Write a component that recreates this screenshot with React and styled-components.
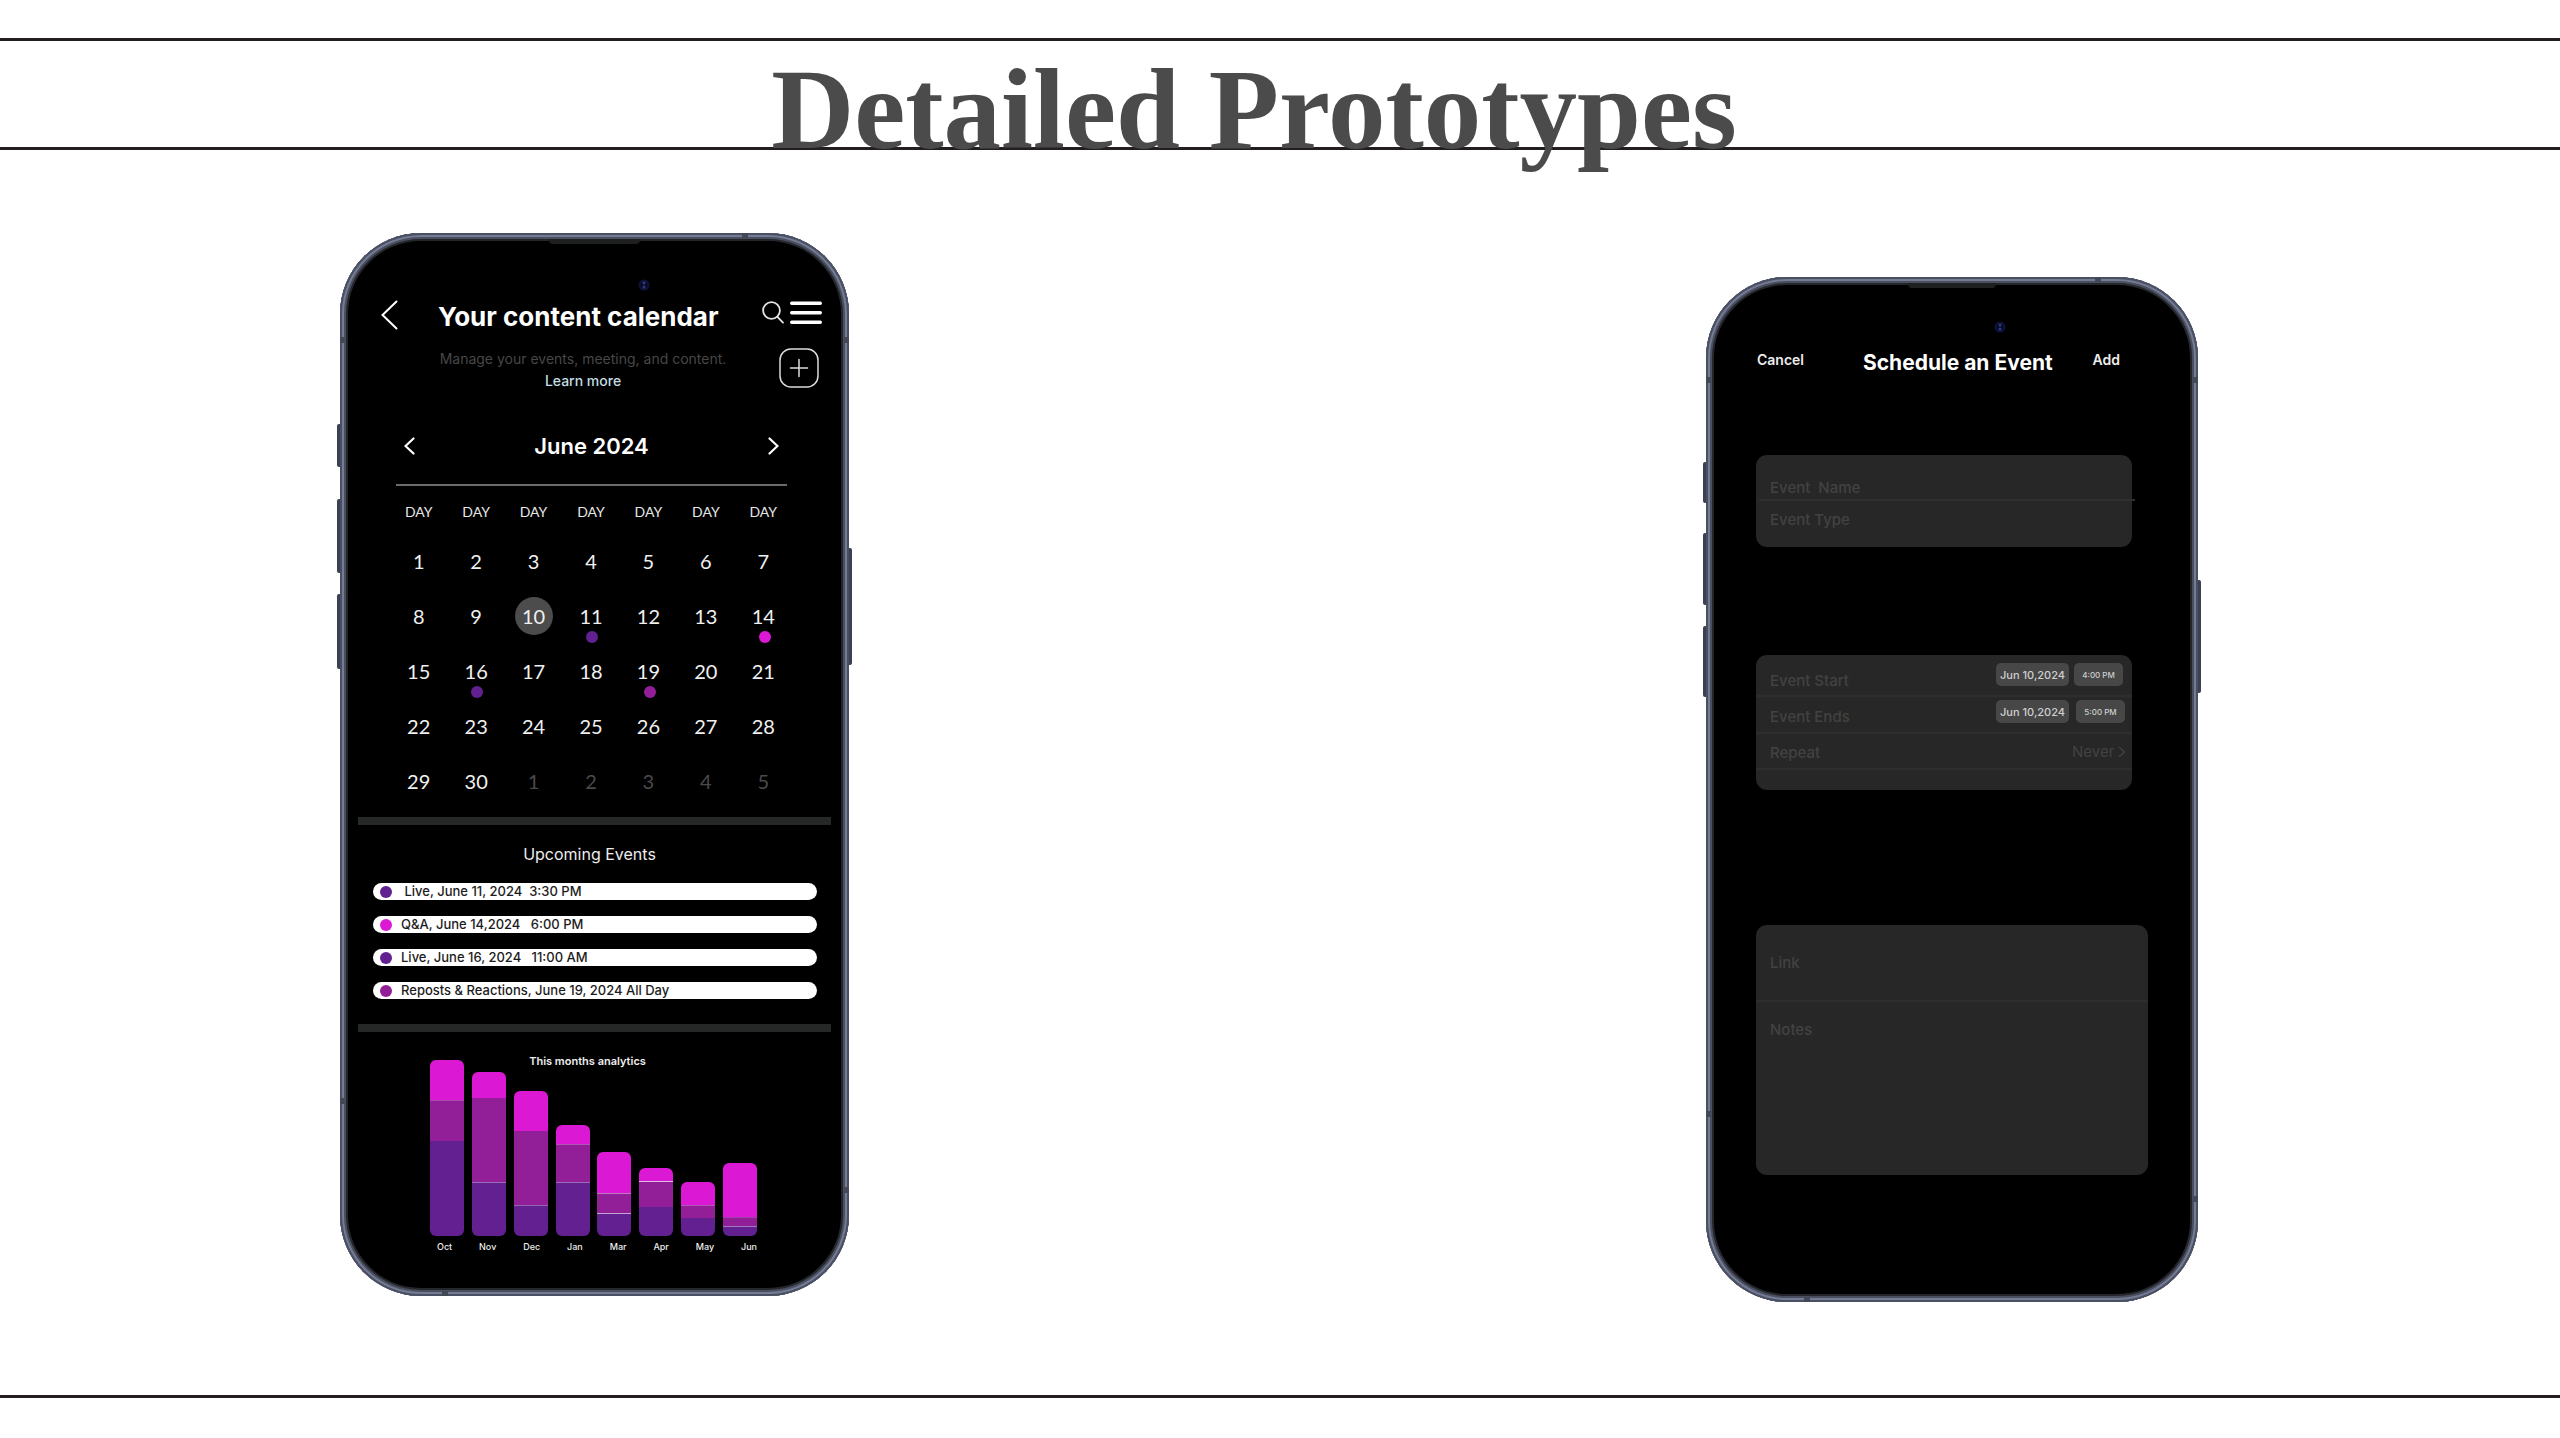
import React from "react";
import styled, { createGlobalStyle } from "styled-components";

const VIOLET = "#622091";
const PLUM = "#931f98";
const MAGENTA = "#db18d3";

const Global = createGlobalStyle`
  *, *::before, *::after { box-sizing: border-box; }
  body { margin: 0; background: #fff; font-family: Inter, "Liberation Sans", sans-serif; }
  h1, h2, h3, p, ul { margin: 0; padding: 0; }
  button, input, select, textarea {
    margin: 0; padding: 0; border: 0; background: none; color: inherit; font: inherit; outline: 0;
  }
  svg { display: block; }
`;

const Page = styled.div`
  display: flex;
  flex-direction: column;
  padding: 38px 0 40px;
`;

const Banner = styled.header`
  height: 112px;
  border-top: 3px solid #231f20;
  border-bottom: 3px solid #231f20;
  padding-right: 52px;
`;

const PageTitle = styled.h1`
  font: 700 115px/138px "Liberation Serif", serif;
  color: #4b4b4b;
  text-align: center;
`;

const Showcase = styled.main`
  display: flex;
  justify-content: space-between;
  align-items: flex-start;
  padding: 83px 362px 93px 340px;
`;

const EndRule = styled.hr`
  width: 100%;
  height: 3px;
  margin: 0;
  border: 0;
  background: #231f20;
`;

/* ---------- phone body ---------- */

const Phone = styled.section`
  position: relative;
  flex: none;
  display: flex;
  flex-direction: column;
  width: ${(p) => p.$width}px;
  min-height: ${(p) => p.$height}px;
  margin-top: ${(p) => p.$drop || 0}px;
  padding-top: ${(p) => p.$top}px;
  border-radius: 81px;
  background: #000;
  color: #fff;
  box-shadow: inset 0 0 0 2px #4a5064, inset 0 0 0 4px #747b93, inset 0 0 0 6px #4a4f60,
    inset 0 0 0 8px #24262b;
`;

const SideKey = styled.span`
  position: absolute;
  ${(p) => p.$side}: -3px;
  top: ${(p) => p.$from}%;
  height: ${(p) => p.$size}%;
  width: 3px;
  border-radius: ${(p) => (p.$side === "left" ? "2px 0 0 2px" : "0 2px 2px 0")};
  background: #3c4152;
`;

const Band = styled.span`
  position: absolute;
  ${(p) => p.$edge}: 0;
  ${(p) => (p.$edge === "left" || p.$edge === "right" ? "top" : "left")}: ${(p) => p.$at}%;
  width: ${(p) => (p.$edge === "left" || p.$edge === "right" ? 5 : 6)}px;
  height: ${(p) => (p.$edge === "left" || p.$edge === "right" ? 6 : 5)}px;
  background: #434857;
`;

const Speaker = styled.span`
  position: absolute;
  top: 6px;
  left: 50%;
  width: 18%;
  height: 5px;
  margin-left: -9%;
  border-radius: 0 0 4px 4px;
  background: #1e2020;
`;

const Lens = styled.svg`
  position: absolute;
  left: 58.5%;
  top: ${(p) => p.$top}px;
  width: 12px;
  height: 12px;
`;

function Hardware({ lensTop }) {
  return (
    <>
      <SideKey $side="left" $from={18} $size={4} />
      <SideKey $side="left" $from={25} $size={7} />
      <SideKey $side="left" $from={34} $size={7} />
      <SideKey $side="right" $from={29.6} $size={11} />
      <Band $edge="left" $at={9.8} />
      <Band $edge="right" $at={9.8} />
      <Band $edge="top" $at={79} />
      <Band $edge="left" $at={81.4} />
      <Band $edge="right" $at={89.7} />
      <Band $edge="bottom" $at={20} />
      <Speaker />
      <Lens $top={lensTop} viewBox="0 0 12 12" aria-hidden="true">
        <circle cx="6" cy="6" r="5.5" fill="#10123a" />
        <circle cx="6" cy="6" r="3.6" fill="#080a20" />
        <circle cx="6" cy="4" r="1.5" fill="#2c3a8c" />
        <circle cx="6" cy="8" r="1.5" fill="#2c3a8c" />
      </Lens>
    </>
  );
}

/* ---------- calendar screen ---------- */

const IconButton = styled.button`
  display: block;
  cursor: pointer;
`;

const CalendarHeader = styled.header`
  display: grid;
  grid-template-columns: 16px 1fr 60px;
  padding: 0 27px 0 41px;
`;

const Heading = styled.div`
  padding: 1px 0 0 41px;
`;

const ScreenTitle = styled.h2`
  font-size: 26px;
  line-height: 32px;
  font-weight: 700;
  white-space: nowrap;
`;

const Intro = styled.div`
  display: flex;
  flex-direction: column;
  align-items: center;
  width: 290px;
  margin-top: 15px;
  font-size: 14px;
  line-height: 22px;
  white-space: nowrap;
  color: #474747;
`;

const LearnMore = styled.a`
  color: #c3dee2;
  font-weight: 500;
  text-decoration: none;
`;

const Actions = styled.div`
  display: flex;
  flex-wrap: wrap;
  justify-content: space-between;
  align-content: flex-start;
  row-gap: 24px;
`;

const AddSlot = styled.div`
  display: flex;
  justify-content: flex-end;
  width: 100%;
  padding-right: 3px;
`;

const MonthNav = styled.nav`
  display: flex;
  align-items: center;
  justify-content: space-between;
  margin: 40px 62px 0 56px;
  padding: 0 8px 24px;
  border-bottom: 2px solid #6b6b6b;
`;

const MonthName = styled.h3`
  font-size: 22px;
  line-height: 28px;
  font-weight: 600;
`;

const MonthGrid = styled.div`
  padding: 0 57px 0 50px;
`;

const MonthTable = styled.table`
  width: 100%;
  table-layout: fixed;
  border-collapse: collapse;
  font-family: Lato, sans-serif;
  text-align: center;
`;

const Weekday = styled.th`
  height: 47px;
  padding: 5px 0 0;
  font-size: 14px;
  line-height: 20px;
  font-weight: 400;
  color: #e6e6e6;
`;

const DayCell = styled.td`
  position: relative;
  height: 55px;
  padding: 0;
  font-size: 20px;
  line-height: 38px;
  color: ${(p) => (p.$muted ? "#4a4a4a" : "#f0f0f0")};
`;

const Today = styled.span`
  display: block;
  width: 38px;
  height: 38px;
  margin: 0 auto;
  border-radius: 50%;
  background: #4c4c4c;
`;

const Dot = styled.span`
  flex: none;
  width: 12px;
  height: 12px;
  border-radius: 50%;
  background: ${(p) => p.$color};
`;

const DayDot = styled(Dot)`
  position: absolute;
  top: 43px;
  left: 24px;
`;

const Divider = styled.hr`
  flex: none;
  height: 8px;
  width: auto;
  margin: ${(p) => p.$above}px 18px 0;
  border: 0;
  background: #262827;
`;

const UpcomingTitle = styled.h3`
  margin-top: 17px;
  padding-right: 10px;
  font-size: 16px;
  line-height: 24px;
  font-weight: 400;
  text-align: center;
  color: #ededed;
`;

const EventList = styled.ul`
  display: flex;
  flex-direction: column;
  gap: 16px;
  margin: 17px 32px 0 33px;
  list-style: none;
`;

const EventPill = styled.li`
  display: flex;
  align-items: center;
  gap: 9px;
  height: 17px;
  padding-left: 7px;
  border-radius: 9px;
  background: #fff;
  color: #1c1c1c;
  font-size: 13px;
  line-height: 17px;
  font-weight: 500;
  white-space: pre;
`;

const Analytics = styled.figure`
  margin: 20px 92px 0 90px;
`;

const Plot = styled.div`
  display: grid;
  height: 184px;
  > * { grid-area: 1 / 1; }
`;

const PlotTitle = styled.figcaption`
  padding-right: 12px;
  font-size: 11px;
  line-height: 18px;
  font-weight: 600;
  text-align: center;
  color: #ededed;
`;

const Bars = styled.div`
  display: flex;
  justify-content: space-between;
  align-items: flex-end;
`;

const Bar = styled.div`
  display: flex;
  flex-direction: column;
  width: 34px;
  border-radius: 6px;
  overflow: hidden;
`;

const Segment = styled.div`
  background: ${(p) => p.$color};
  box-shadow: ${(p) => (p.$edge ? `inset 0 1px 0 rgba(255, 255, 255, ${p.$edge})` : "none")};
`;

const MonthLabels = styled.div`
  display: flex;
  justify-content: space-between;
  margin-top: 4px;
  padding-left: 7px;
  font-size: 9px;
  line-height: 14px;
  font-weight: 500;
  color: #ededed;
`;

const weeks = [
  [1, 2, 3, 4, 5, 6, 7],
  [8, 9, 10, 11, 12, 13, 14],
  [15, 16, 17, 18, 19, 20, 21],
  [22, 23, 24, 25, 26, 27, 28],
  [29, 30, 1, 2, 3, 4, 5],
];

const marked = { 11: VIOLET, 14: MAGENTA, 16: VIOLET, 19: PLUM };

const events = [
  { color: VIOLET, text: " Live, June 11, 2024  3:30 PM" },
  { color: MAGENTA, text: "Q&A, June 14,2024   6:00 PM" },
  { color: VIOLET, text: "Live, June 16, 2024   11:00 AM" },
  { color: PLUM, text: "Reposts & Reactions, June 19, 2024 All Day" },
];

const analytics = [
  { month: "Oct", parts: [40, 41, 95], edges: [0.2, 0] },
  { month: "Nov", parts: [26, 84, 54], edges: [0, 0.35] },
  { month: "Dec", parts: [40, 74, 31], edges: [0, 0.3] },
  { month: "Jan", parts: [19, 38, 54], edges: [0.25, 0.35] },
  { month: "Mar", parts: [41, 20, 23], edges: [0.4, 0.6] },
  { month: "Apr", parts: [13, 26, 29], edges: [0.7, 0] },
  { month: "May", parts: [23, 13, 18], edges: [0.25, 0] },
  { month: "Jun", parts: [54, 9, 10], edges: [0.15, 0.4] },
];

function Chevron({ width, height, flip, weight = 2 }) {
  const d = flip
    ? `M1.5 1.5 L${width - 1.5} ${height / 2} L1.5 ${height - 1.5}`
    : `M${width - 1.5} 1.5 L1.5 ${height / 2} L${width - 1.5} ${height - 1.5}`;
  return (
    <svg width={width} height={height} fill="none" stroke="currentColor" strokeWidth={weight}
      strokeLinecap="round" aria-hidden="true">
      <path d={d} />
    </svg>
  );
}

function CalendarPhone() {
  return (
    <Phone $width={509} $height={1063} $top={67}>
      <Hardware lensTop={46} />
      <CalendarHeader>
        <div>
          <IconButton aria-label="Back">
            <Chevron width={17} height={30} weight={2} />
          </IconButton>
        </div>
        <Heading>
          <ScreenTitle>Your content calendar</ScreenTitle>
          <Intro>
            <p>Manage your events, meeting, and content.</p>
            <LearnMore href="#learn">Learn more</LearnMore>
          </Intro>
        </Heading>
        <Actions>
          <IconButton aria-label="Search">
            <svg width="22" height="23" fill="none" stroke="#e4e4e4" strokeWidth="1.8" strokeLinecap="round">
              <circle cx="9.5" cy="9.5" r="8.4" />
              <path d="M15.2 15.6 L21 21.6" />
            </svg>
          </IconButton>
          <IconButton aria-label="Menu">
            <svg width="32" height="24" stroke="#fff" strokeWidth="3.4" strokeLinecap="round">
              <path d="M1.7 3.2 H30.3 M1.7 12.8 H30.3 M1.7 22.2 H30.3" />
            </svg>
          </IconButton>
          <AddSlot>
            <IconButton aria-label="New event">
              <svg width="40" height="40" fill="none" stroke="#dcdcdc" strokeWidth="1.5" strokeLinecap="round">
                <rect x="1" y="1" width="38" height="38" rx="11" />
                <path d="M11.5 20 H28.5 M20 11.5 V28.5" />
              </svg>
            </IconButton>
          </AddSlot>
        </Actions>
      </CalendarHeader>

      <MonthNav>
        <IconButton aria-label="Previous month"><Chevron width={11} height={18} weight={2.2} /></IconButton>
        <MonthName>June 2024</MonthName>
        <IconButton aria-label="Next month"><Chevron width={11} height={18} weight={2.2} flip /></IconButton>
      </MonthNav>

      <MonthGrid>
        <MonthTable>
          <thead>
            <tr>{weeks[0].map((d) => <Weekday key={d} scope="col">DAY</Weekday>)}</tr>
          </thead>
          <tbody>
            {weeks.map((week, w) => (
              <tr key={w}>
                {week.map((day) => (
                  <DayCell key={day} $muted={w === 4 && day < 10}>
                    {day === 10 ? <Today>{day}</Today> : day}
                    {marked[day] && <DayDot $color={marked[day]} />}
                  </DayCell>
                ))}
              </tr>
            ))}
          </tbody>
        </MonthTable>
      </MonthGrid>

      <Divider $above={9} />
      <UpcomingTitle>Upcoming Events</UpcomingTitle>
      <EventList>
        {events.map((e) => (
          <EventPill key={e.text}>
            <Dot $color={e.color} />
            <span>{e.text}</span>
          </EventPill>
        ))}
      </EventList>
      <Divider $above={25} />

      <Analytics>
        <Plot>
          <Bars>
            {analytics.map(({ month, parts, edges }) => (
              <Bar key={month}>
                <Segment $color={MAGENTA} style={{ height: parts[0] }} />
                <Segment $color={PLUM} $edge={edges[0]} style={{ height: parts[1] }} />
                <Segment $color={VIOLET} $edge={edges[1]} style={{ height: parts[2] }} />
              </Bar>
            ))}
          </Bars>
          <PlotTitle>This months analytics</PlotTitle>
        </Plot>
        <MonthLabels>
          {analytics.map(({ month }) => <span key={month}>{month}</span>)}
        </MonthLabels>
      </Analytics>
    </Phone>
  );
}

/* ---------- schedule screen ---------- */

const FormHeader = styled.header`
  display: grid;
  grid-template-columns: 106px auto 1fr;
  align-items: start;
  padding: 0 78px 0 51px;
`;

const TextButton = styled.button`
  justify-self: ${(p) => p.$align || "start"};
  font-size: 14px;
  line-height: 24px;
  font-weight: 600;
  color: #ededed;
  cursor: pointer;
`;

const FormTitle = styled.h2`
  font-size: 21px;
  line-height: 30px;
  font-weight: 700;
  white-space: nowrap;
`;

const Card = styled.div`
  margin: ${(p) => p.$above}px ${(p) => p.$right}px 0 50px;
  min-height: ${(p) => p.$height}px;
  border-radius: 11px;
  background: #272727;
  color: #424242;
  font-size: 15px;
  line-height: 22px;
`;

const Row = styled.div`
  display: flex;
  align-items: flex-start;
  height: ${(p) => p.$height}px;
  padding-left: 14px;
`;

const Rule = styled.hr`
  height: 2px;
  margin: 0 -${(p) => p.$shift || 0}px 0 ${(p) => p.$shift || 0}px;
  border: 0;
  background: #2e2e2e;
`;

const FieldLabel = styled.label`
  padding-top: ${(p) => p.$top}px;
  font-weight: 500;
  white-space: pre;
`;

const Field = styled.input`
  flex: 1;
  min-width: 0;
  height: 100%;
  margin-left: 10px;
`;

const NotesField = styled.textarea`
  flex: 1;
  height: 160px;
  margin-left: 10px;
  resize: none;
`;

const Chips = styled.div`
  display: flex;
  gap: ${(p) => p.$gap}px;
  margin-left: auto;
  padding: ${(p) => p.$top}px ${(p) => p.$right}px 0 0;
`;

const Chip = styled.button`
  width: ${(p) => (p.$small ? 49 : 73)}px;
  height: 23px;
  border-radius: 5px;
  background: #474747;
  color: #cfcfcf;
  font-size: ${(p) => (p.$small ? 8 : 11)}px;
  line-height: 22px;
  font-weight: 500;
  white-space: nowrap;
  cursor: pointer;
`;

const RepeatPicker = styled.span`
  display: flex;
  align-items: center;
  gap: 3px;
  margin-left: auto;
  padding: 7px 6px 0 0;
`;

const RepeatSelect = styled.select`
  appearance: none;
  width: 43px;
  height: 22px;
  color: #424242;
`;

function SchedulePhone() {
  return (
    <Phone $width={492} $height={1025} $top={71} $drop={44}>
      <Hardware lensTop={44} />
      <FormHeader>
        <TextButton>Cancel</TextButton>
        <FormTitle>Schedule an Event</FormTitle>
        <TextButton $align="end">Add</TextButton>
      </FormHeader>

      <Card $above={77} $right={66} $height={92}>
        <Row $height={44}>
          <FieldLabel htmlFor="event-name" $top={22}>{"Event  Name"}</FieldLabel>
          <Field id="event-name" />
        </Row>
        <Rule $shift={3} />
        <Row $height={46}>
          <FieldLabel htmlFor="event-type" $top={8}>Event Type</FieldLabel>
          <Field id="event-type" />
        </Row>
      </Card>

      <Card $above={108} $right={66} $height={135}>
        <Row $height={40}>
          <FieldLabel htmlFor="start-date" $top={15}>Event Start</FieldLabel>
          <Chips $top={8} $right={9} $gap={5}>
            <Chip id="start-date">Jun 10,2024</Chip>
            <Chip $small>4:00 PM</Chip>
          </Chips>
        </Row>
        <Rule />
        <Row $height={35}>
          <FieldLabel htmlFor="end-date" $top={9}>Event Ends</FieldLabel>
          <Chips $top={3} $right={7} $gap={7}>
            <Chip id="end-date">Jun 10,2024</Chip>
            <Chip $small>5:00 PM</Chip>
          </Chips>
        </Row>
        <Rule />
        <Row $height={34}>
          <FieldLabel htmlFor="repeat" $top={8}>Repeat</FieldLabel>
          <RepeatPicker>
            <RepeatSelect id="repeat" defaultValue="Never">
              <option>Never</option>
            </RepeatSelect>
            <Chevron width={8} height={12} weight={1.4} flip />
          </RepeatPicker>
        </Row>
        <Rule />
      </Card>

      <Card $above={135} $right={50} $height={250}>
        <Row $height={75}>
          <FieldLabel htmlFor="link" $top={27}>Link</FieldLabel>
          <Field id="link" />
        </Row>
        <Rule />
        <Row $height={173}>
          <FieldLabel htmlFor="notes" $top={17}>Notes</FieldLabel>
          <NotesField id="notes" />
        </Row>
      </Card>
    </Phone>
  );
}

export default function App() {
  return (
    <>
      <Global />
      <Page>
        <Banner>
          <PageTitle>Detailed Prototypes</PageTitle>
        </Banner>
        <Showcase>
          <CalendarPhone />
          <SchedulePhone />
        </Showcase>
        <EndRule />
      </Page>
    </>
  );
}
